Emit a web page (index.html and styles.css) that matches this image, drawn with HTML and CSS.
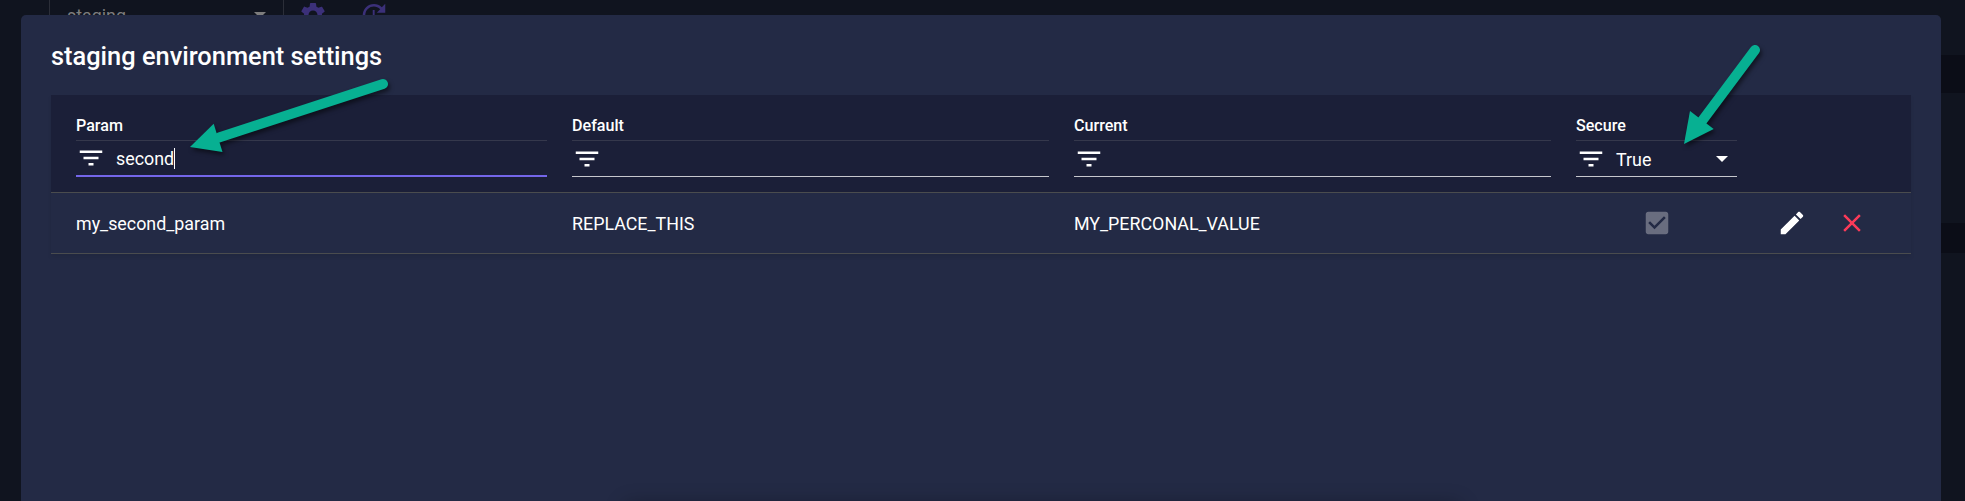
FILE: index.html
```html
<!DOCTYPE html>
<html lang="en">
<head>
<meta charset="utf-8">
<title>Environment settings</title>
<link rel="stylesheet" href="styles.css">
</head>
<body>
<svg class="sprite" aria-hidden="true">
  <symbol id="filter" viewBox="0 0 24 24"><path d="M10 18h4v-2h-4v2zM3 6v2h18V6H3zm3 7h12v-2H6v2z"/></symbol>
</svg>
<div class="page">
  <div class="toolbar">
    <div class="env-select"><span>staging</span><i class="caret"></i></div>
    <svg class="icon gear" viewBox="0 0 24 24"><path d="M19.14 12.94c.04-.3.06-.61.06-.94 0-.32-.02-.64-.07-.94l2.03-1.58c.18-.14.23-.41.12-.61l-1.92-3.32c-.12-.22-.37-.29-.59-.22l-2.39.96c-.5-.38-1.03-.7-1.62-.94l-.36-2.54c-.04-.24-.24-.41-.48-.41h-3.84c-.24 0-.43.17-.47.41l-.36 2.54c-.59.24-1.13.57-1.62.94l-2.39-.96c-.22-.08-.47 0-.59.22L2.74 8.87c-.12.21-.08.47.12.61l2.03 1.58c-.05.3-.09.63-.09.94s.02.64.07.94l-2.03 1.58c-.18.14-.23.41-.12.61l1.92 3.32c.12.22.37.29.59.22l2.39-.96c.5.38 1.03.7 1.62.94l.36 2.54c.05.24.24.41.48.41h3.84c.24 0 .44-.17.47-.41l.36-2.54c.59-.24 1.13-.56 1.62-.94l2.39.96c.22.08.47 0 .59-.22l1.92-3.32c.12-.22.07-.47-.12-.61l-2.01-1.58zM12 15.6c-1.98 0-3.6-1.62-3.6-3.6s1.62-3.6 3.6-3.6 3.6 1.62 3.6 3.6-1.62 3.6-3.6 3.6z"/></svg>
    <svg class="icon" viewBox="0 0 24 24"><path d="M21 10.12h-6.78l2.74-2.82c-2.73-2.7-7.15-2.8-9.88-.1-2.73 2.71-2.73 7.08 0 9.79s7.15 2.71 9.88 0C18.32 15.65 19 14.08 19 12.1h2c0 1.98-.88 4.55-2.64 6.29-3.51 3.48-9.21 3.48-12.72 0-3.5-3.47-3.53-9.11-.02-12.58s9.14-3.47 12.65 0L21 3v7.12zM12.5 8v4.25l3.5 2.08-.72 1.21L11 13V8h1.5z"/></svg>
  </div>
  <div class="band band-top"></div>
  <div class="band band-low"></div>
</div>

<section class="dialog">
  <h2 class="title">staging environment settings</h2>
  <div class="table">
    <div class="grid head">
      <div class="col">
        <div class="label">Param</div>
        <div class="field focused"><svg class="icon"><use href="#filter"/></svg><span class="value">second</span><i class="cursor"></i></div>
      </div>
      <div class="col">
        <div class="label">Default</div>
        <div class="field"><svg class="icon"><use href="#filter"/></svg></div>
      </div>
      <div class="col">
        <div class="label">Current</div>
        <div class="field"><svg class="icon"><use href="#filter"/></svg></div>
      </div>
      <div class="col">
        <div class="label">Secure</div>
        <div class="field"><svg class="icon"><use href="#filter"/></svg><span class="value option">True</span><i class="caret"></i></div>
      </div>
    </div>
    <div class="grid row">
      <div class="text">my_second_param</div>
      <div class="text">REPLACE_THIS</div>
      <div class="text">MY_PERCONAL_VALUE</div>
      <div class="check"><svg class="icon" viewBox="0 0 24 24"><path d="M19 3H5c-1.11 0-2 .9-2 2v14c0 1.1.89 2 2 2h14c1.11 0 2-.9 2-2V5c0-1.1-.89-2-2-2zm-9 14l-5-5 1.41-1.41L10 14.17l7.59-7.59L19 8l-9 9z"/></svg></div>
      <div class="actions">
        <svg class="icon" viewBox="0 0 24 24"><path d="M3 17.25V21h3.75L17.81 9.94l-3.75-3.75L3 17.25zM20.71 7.04c.39-.39.39-1.02 0-1.41l-2.34-2.34c-.39-.39-1.02-.39-1.41 0l-1.83 1.83 3.75 3.75 1.83-1.83z"/></svg>
        <svg class="icon remove" viewBox="0 0 24 24"><path d="M19 6.41L17.59 5 12 10.59 6.41 5 5 6.41 10.59 12 5 17.59 6.41 19 12 13.41 17.59 19 19 17.59 13.41 12z"/></svg>
      </div>
    </div>
  </div>
  <div class="toast"></div>
</section>

<svg class="arrows" viewBox="0 0 1965 501">
  <g><path class="shaft" d="M383 84L219 137.500"/><path d="M190 147L213.700 123.700L222.500 152Z"/></g>
  <g><path class="shaft" d="M1755 50L1702 121"/><path d="M1684 144L1690 111L1713.700 129Z"/></g>
</svg>
</body>
</html>
```
FILE: styles.css
```css
* { box-sizing: border-box; }
body {
  margin: 0;
  height: 501px;
  overflow: hidden;
  position: relative;
  display: flow-root;
  background: #10141f;
  color: #fff;
  font: 17.85px Roboto, sans-serif;
}
.sprite { position: absolute; width: 0; height: 0; }
.icon { width: 30px; height: 30px; fill: currentColor; flex: none; display: block; }
.caret { width: 0; height: 0; border: 6.25px solid transparent; border-top-color: currentColor; border-bottom: 0; }

.page { position: absolute; inset: 0; overflow: hidden; }
.toolbar { display: flex; height: 32px; padding-left: 49px; color: #3b3079; }
.env-select {
  display: flex;
  justify-content: space-between;
  width: 235px;
  height: 32px;
  padding: 3px 17px 0;
  line-height: 25px;
  border: solid #2b2e38;
  border-width: 0 1px;
  color: #7d7d7d;
}
.env-select .caret { margin-top: 9px; }
.toolbar .icon { margin-left: 31px; }
.toolbar .gear { margin-left: 14px; }
.band { position: absolute; left: 1941px; right: 0; background: #0b0d17; }
.band-top { top: 55px; height: 38px; }
.band-low { top: 223px; height: 30px; }

.dialog {
  position: relative;
  overflow: hidden;
  margin: 15px 24px 0 21px;
  height: 486px;
  padding: 21px 30px 0;
  border-radius: 5px 5px 0 0;
  background: #232a45;
}
.title { margin: 0 0 19px; font-size: 25.4px; line-height: 40px; font-weight: 500; }
.table { box-shadow: 0 3px 4px rgba(0, 0, 0, .08); }
.grid {
  display: grid;
  grid-template-columns: 471px 477px 477px 161px 1fr;
  column-gap: 25px;
  padding: 0 25px;
  border-bottom: 1px solid #4a4c4e;
}
.head { height: 98px; background: #1b1f38; align-items: start; }
.label {
  height: 46px;
  padding-top: 20px;
  line-height: 21px;
  font-size: 16.1px;
  font-weight: 500;
  border-bottom: 1px solid #35384c;
}
.field { display: flex; align-items: center; height: 36px; border-bottom: 1px solid #c6c7cd; }
.focused { border-bottom: 2px solid #7466ea; }
.value { margin-left: 10px; padding-top: 1px; }
.option { flex: 1; }
.cursor { width: 1px; height: 21px; background: #fff; }
.field .caret { margin-right: 9px; }
.row { height: 61px; align-items: center; }
.text { padding-top: 1px; }
.check { display: flex; justify-content: center; color: #696d7f; }
.actions { display: flex; gap: 30px; padding-left: 15px; }
.remove { color: #f93a58; }

.toast {
  position: absolute;
  top: 489px;
  left: 604px;
  width: 835px;
  height: 60px;
  box-shadow: 0 0 20px rgba(0, 0, 0, .3);
}
.arrows {
  position: absolute;
  inset: 0;
  width: 1965px;
  height: 501px;
  fill: #07b092;
  filter: drop-shadow(2px 3px 2px rgba(0, 0, 0, .5));
}
.shaft { stroke: #07b092; stroke-width: 10; stroke-linecap: round; }
```
